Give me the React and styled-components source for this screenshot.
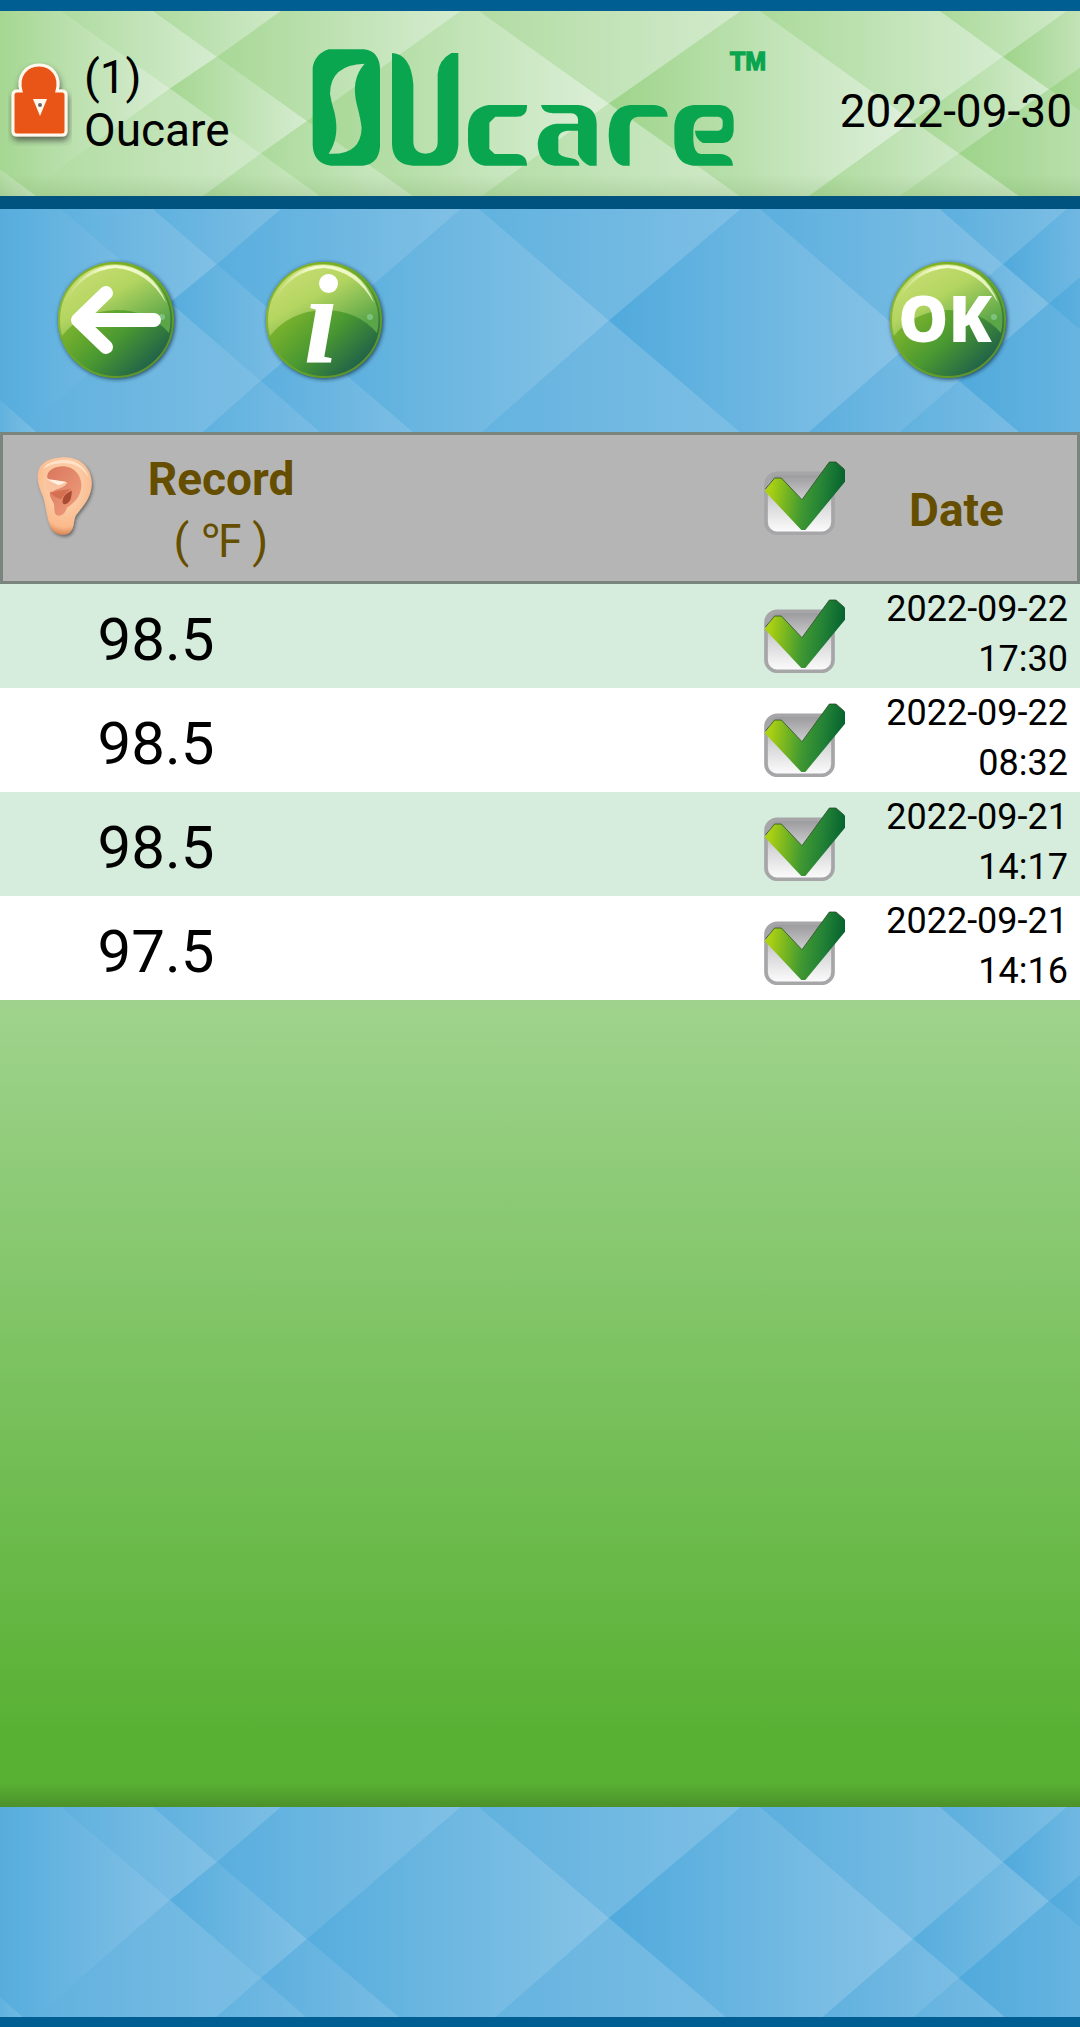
import React, { useId, useState } from "react";
import styled, { createGlobalStyle } from "styled-components";

const GlobalStyle = createGlobalStyle`
  *, *::before, *::after { box-sizing: border-box; }
  body {
    margin: 0;
    font-family: Roboto, "Noto Sans", sans-serif;
    color: #000;
  }
`;

/* ---------- faceted background ---------- */

const palettes = {
  green: { dark: [158, 212, 138], light: [223, 240, 220] },
  blue: { dark: [80, 170, 220], light: [138, 196, 231] },
};

const facets = [
  { points: "0,0 61,0 170,93 22,222 0,222", from: 0.1, to: 0.9 },
  { points: "0,222 22,222 170,93 261,171 203,222", from: 0.2, to: 0.75 },
  { points: "0,190 36,222 0,222", from: 0.3, to: 0.75 },
  { points: "61,0 153,0 217,55 170,93", from: 0.25, to: 0.85 },
  { points: "153,0 281,0 217,55", from: 0.25, to: 0.75 },
  { points: "170,93 217,55 307,132 261,171", from: 0.1, to: 0.85 },
  { points: "281,0 461,0 307,132 217,55", from: 0.15, to: 0.85 },
  { points: "203,222 261,171 320,222", from: 0.25, to: 0.7 },
  { points: "261,171 307,132 413,222 320,222", from: 0.2, to: 0.75 },
  { points: "461,0 479,0 609,111 482,222 413,222 307,132", from: 0.1, to: 0.95 },
  { points: "479,0 741,0 609,111", from: 0.3, to: 0.8 },
  { points: "482,222 609,111 740,222", from: 0.35, to: 0.75 },
  { points: "741,0 760,0 913,132 809,222 740,222 609,111", from: 0, to: 1 },
  { points: "760,0 940,0 1003,55 913,132", from: 0.2, to: 0.85 },
  { points: "940,0 1067,0 1003,55", from: 0.2, to: 0.75 },
  { points: "913,132 1003,55 1049,94 959,171", from: 0.1, to: 0.85 },
  { points: "1067,0 1080,0 1080,68 1049,94 1003,55", from: 0, to: 0.55 },
  { points: "1049,94 1080,68 1080,120", from: 0, to: 0.2 },
  { points: "809,222 913,132 959,171 900,222", from: 0.2, to: 0.75 },
  { points: "900,222 959,171 1019,222", from: 0.3, to: 0.7 },
  { points: "959,171 1049,94 1080,120 1080,222 1019,222", from: 0, to: 0.4 },
];

const mix = ({ dark, light }, t) =>
  `rgb(${dark.map((c, i) => Math.round(c + (light[i] - c) * t)).join(",")})`;

const FacetSvg = styled.svg`
  display: block;
  width: 100%;
  height: 100%;
  min-height: 0;
`;

function Facets({ tone, crop, shaded }) {
  const id = useId();
  const palette = palettes[tone];
  return (
    <FacetSvg
      viewBox="0 0 1080 222"
      preserveAspectRatio={crop ? "xMinYMin slice" : "none"}
      aria-hidden="true"
    >
      <defs>
        {facets.map((f, i) => (
          <linearGradient key={i} id={`${id}f${i}`}>
            <stop offset="0" stopColor={mix(palette, f.from)} />
            <stop offset="1" stopColor={mix(palette, f.to)} />
          </linearGradient>
        ))}
        <linearGradient id={`${id}s`} x2="0" y2="1">
          <stop offset="0" stopColor="#4b7a2c" stopOpacity="0" />
          <stop offset="1" stopColor="#4b7a2c" stopOpacity="0.14" />
        </linearGradient>
      </defs>
      <rect width="1080" height="222" fill={mix(palette, 0.4)} />
      {facets.map((f, i) => (
        <polygon key={i} points={f.points} fill={`url(#${id}f${i})`} />
      ))}
      {shaded && <rect y="196" width="1080" height="26" fill={`url(#${id}s)`} />}
    </FacetSvg>
  );
}

/* ---------- drawings ---------- */

const LockIcon = () => (
  <svg width="64" height="84" viewBox="-3 0 64 84" aria-hidden="true">
    <defs>
      <filter id="lockShadow" x="-20%" y="-20%" width="150%" height="150%">
        <feDropShadow dx="1" dy="4" stdDeviation="3" floodColor="#333" floodOpacity="0.7" />
      </filter>
    </defs>
    <path
      d="M10 29 C6 14 15 3 28 3 C41 3 50 14 46 29 H51 Q55 29 55 33 V69 Q55 73 51 73 H6 Q2 73 2 69 V33 Q2 29 6 29 Z"
      fill="#e85412"
      stroke="#fff8ee"
      strokeWidth="3"
      filter="url(#lockShadow)"
    />
    <path d="M22 37 H36 L29 54 Z" fill="#fff8ee" />
    <circle cx="29" cy="43" r="2" fill="#666" />
  </svg>
);

const Logo = styled.svg`
  display: block;
  width: 456px;
  height: 122px;
`;

const LogoBox = styled.div`
  padding-top: 3px;
`;

const Brand = () => (
  <LogoBox>
    <Logo viewBox="22 10 1368 366" role="img" aria-label="OUcare">
      <g fill="#0aa54f">
        <path
          fillRule="evenodd"
          d="M72 26H178Q226 32 226 88V318Q222 370 174 375H80Q27 370 24 314V82Q30 40 72 26ZM180 69Q76 72 76 160Q80 185 90 218Q106 290 72 339Q168 345 171 262Q168 235 156 190Q138 115 180 69Z"
        />
        <path d="M262 37Q318 40 326 130V305Q328 338 362 339Q398 338 399 305V100Q402 58 440 37H461V312Q458 370 405 375H325Q264 372 262 310Z" />
        <path d="M667 193V198Q667 228 635 228H572L554 246V325L570 340H635Q667 342 667 375H540Q490 366 490 300V265Q492 202 552 193Z" />
        <path d="M709 193H820Q874 197 876 248V375H855Q832 366 820 340V270H788Q764 272 761 290V335Q765 348 800 353Q826 358 824 375H750Q702 370 699 310Q702 256 755 249H820V235Q818 220 800 218H745Q712 216 709 193Z" />
        <path d="M1089 228H1000Q976 230 975 258V375H955Q915 365 912 285Q912 200 975 193H1045Q1088 195 1089 228Z" />
        <path d="M1167 193H1245Q1286 196 1287 240V270Q1284 304 1255 307H1195Q1172 295 1171 270H1240Q1253 268 1254 255V240Q1252 229 1240 228H1195Q1167 232 1166 270V300Q1168 338 1188 340H1245Q1283 342 1285 375H1165Q1112 370 1109 305V255Q1114 198 1167 193Z" />
        <text
          x="1384"
          y="89"
          textAnchor="end"
          fontFamily="'Liberation Sans', Arial, sans-serif"
          fontWeight="700"
          fontSize="75"
          stroke="#0aa54f"
          strokeWidth="4"
        >
          TM
        </text>
      </g>
    </Logo>
  </LogoBox>
);

function Disc() {
  const id = useId();
  return (
    <svg width="128" height="128" viewBox="-5 -5 128 128" aria-hidden="true">
      <defs>
        <linearGradient id={`${id}b`} x1="0.1" y1="0.3" x2="0.75" y2="1">
          <stop offset="0" stopColor="#93bf2c" />
          <stop offset="0.55" stopColor="#4b9a30" />
          <stop offset="1" stopColor="#1c5c4c" />
        </linearGradient>
        <linearGradient id={`${id}g`} x1="0.2" y1="0" x2="0.9" y2="0.8">
          <stop offset="0" stopColor="#c9df76" />
          <stop offset="0.45" stopColor="#b4d560" />
          <stop offset="1" stopColor="#5aa548" />
        </linearGradient>
        <linearGradient id={`${id}r`}>
          <stop offset="0" stopColor="#f4fbd0" stopOpacity="0" />
          <stop offset="0.4" stopColor="#f4fbd0" />
          <stop offset="1" stopColor="#f4fbd0" stopOpacity="0.8" />
        </linearGradient>
        <filter id={`${id}s`} x="-20%" y="-20%" width="140%" height="140%">
          <feDropShadow dx="1" dy="1" stdDeviation="2" floodColor="#123" floodOpacity="0.8" />
        </filter>
      </defs>
      <circle cx="59" cy="59" r="58" fill={`url(#${id}b)`} filter={`url(#${id}s)`} />
      <path d="M4 76A56 56 0 1 1 112 72Q92 49 59 49Q24 50 4 76Z" fill={`url(#${id}g)`} />
      <path d="M8 42Q24 5 59 4Q96 6 109 42Q91 10 59 7Q26 9 8 42Z" fill={`url(#${id}r)`} />
      <circle cx="59" cy="59" r="57" fill="none" stroke="#76aa22" strokeWidth="2" strokeOpacity="0.7" />
      <circle cx="105" cy="56" r="3" fill="#8fd3a0" fillOpacity="0.6" />
    </svg>
  );
}

const BackArrow = () => (
  <svg width="92" height="68" viewBox="0 0 92 68" aria-hidden="true">
    <path
      d="M36 7L8 34L36 61M10 34H84"
      fill="none"
      stroke="#fff"
      strokeWidth="14"
      strokeLinecap="round"
      strokeLinejoin="round"
    />
  </svg>
);

const EarIcon = () => (
  <svg width="60" height="84" viewBox="0 0 180 252" aria-hidden="true">
    <defs>
      <radialGradient id="earSkin" cx="0.5" cy="0.35" r="0.65">
        <stop offset="0.5" stopColor="#fbc9a2" />
        <stop offset="0.85" stopColor="#fbb98a" />
        <stop offset="1" stopColor="#d98758" />
      </radialGradient>
      <linearGradient id="earInner" x1="0" y1="0" x2="1" y2="1">
        <stop offset="0" stopColor="#d9765c" />
        <stop offset="1" stopColor="#f0a07e" />
      </linearGradient>
      <filter id="earShadow" x="-20%" y="-20%" width="150%" height="150%">
        <feDropShadow dx="4" dy="6" stdDeviation="5" floodColor="#333" floodOpacity="0.55" />
      </filter>
    </defs>
    <path
      d="M80 4C132 0 170 38 167 88C163 130 142 148 120 178C111 194 117 216 101 230C84 242 54 236 44 214C32 184 30 150 22 124C8 92 0 66 8 42C18 16 46 6 80 4Z"
      fill="url(#earSkin)"
      filter="url(#earShadow)"
    />
    <path d="M20 40C34 18 58 12 90 12C122 14 150 34 158 66C140 34 116 22 84 22C56 22 38 28 20 40Z" fill="#ffe3c9" />
    <path
      d="M34 66C30 44 58 30 84 31C120 33 139 66 136 94C132 124 114 142 94 154C88 168 82 180 67 179C50 176 58 156 53 142C46 128 36 116 44 104L70 84C60 74 44 78 34 66Z"
      fill="url(#earInner)"
    />
    <path d="M32 70C52 80 74 72 94 80C88 92 72 96 58 102C44 112 34 108 30 94Z" fill="#f9c3a1" />
    <path d="M32 69Q60 72 92 78Q82 82 68 88Q50 80 32 69Z" fill="#fff1e4" />
    <path d="M108 104C90 110 78 122 80 142C90 150 104 138 106 120Z" fill="#a94a33" />
    <path d="M44 110Q66 104 106 98Q82 116 76 130Q54 124 44 110Z" fill="#d47051" />
  </svg>
);

/* ---------- checkbox ---------- */

const TickLabel = styled.label`
  display: inline-grid;
  vertical-align: middle;
  cursor: pointer;
  & > * {
    grid-area: 1 / 1;
  }
`;

const TickInput = styled.input`
  appearance: none;
  width: 100%;
  height: 100%;
  margin: 0;
`;

const TickSvg = styled.svg`
  display: block;
  width: 81px;
  height: 74px;
  pointer-events: none;
`;

function Tick({ label, checked, onChange }) {
  const id = useId();
  return (
    <TickLabel>
      <TickInput type="checkbox" aria-label={label} checked={checked} onChange={onChange} />
      <TickSvg viewBox="0 0 243 222" aria-hidden="true">
        <defs>
          <linearGradient id={`${id}b`} x2="0" y2="1">
            <stop offset="0" stopColor="#98989b" />
            <stop offset="0.5" stopColor="#d6d6d8" />
            <stop offset="1" stopColor="#fdfdfd" />
          </linearGradient>
          <linearGradient id={`${id}c`} y1="0.3" y2="0.4">
            <stop offset="0.08" stopColor="#aad012" />
            <stop offset="0.5" stopColor="#3f9832" />
            <stop offset="0.75" stopColor="#218036" />
            <stop offset="1" stopColor="#04602f" />
          </linearGradient>
        </defs>
        <rect x="6" y="37" width="201" height="180" rx="34" fill={`url(#${id}b)`} stroke="#a6a6a9" strokeWidth="11" />
        {checked && (
          <>
            <path d="M2 90L32 51H52L114 116L196 3H216L243 26V62L124 207H112Z" fill={`url(#${id}c)`} />
            <path d="M4 84L32 51H52L114 116L196 3H216L240 24" fill="none" stroke="#23481c" strokeWidth="3" strokeOpacity="0.75" />
          </>
        )}
      </TickSvg>
    </TickLabel>
  );
}

/* ---------- page ---------- */

const Page = styled.div`
  display: flex;
  flex-direction: column;
  min-height: 100vh;
`;

const Rule = styled.div`
  height: ${(p) => p.$size}px;
  background: ${(p) => (p.$deep ? "#00527f" : "#005e93")};
`;

const Band = styled.div`
  display: grid;
  grid-template-columns: minmax(0, 1fr);
  grid-template-rows: ${(p) => p.$height}px;
  & > * {
    grid-area: 1 / 1;
  }
`;

const HeaderContent = styled.header`
  display: grid;
  grid-template-columns: 1fr auto 1fr;
  align-items: center;
  padding: 0 8px;
`;

const User = styled.div`
  display: flex;
  align-items: center;
  gap: 12px;
  font-size: 46px;
  line-height: 53px;
`;

const Today = styled.time`
  justify-self: end;
  padding-top: 16px;
  font-size: 46px;
  line-height: 53px;
`;

const Toolbar = styled.nav`
  display: grid;
  grid-template-columns: repeat(5, 1fr);
  align-items: center;
  justify-items: center;
  padding: 0 28px 2px 12px;
`;

const RoundButton = styled.button`
  display: grid;
  place-items: center;
  grid-column: ${(p) => p.$column};
  width: 128px;
  height: 128px;
  padding: 0;
  border: 0;
  border-radius: 50%;
  background: none;
  color: #fff;
  cursor: pointer;
  & > * {
    grid-area: 1 / 1;
  }
`;

const OkText = styled.span`
  padding: 0 6px 4px 0;
  font: 800 63px/60px "Open Sans", "Noto Sans", sans-serif;
`;

const InfoText = styled.span`
  padding-right: 6px;
  font: italic 700 126px/118px "Liberation Serif", serif;
`;

const Main = styled.main`
  flex: 1;
  background:
    linear-gradient(to top, rgba(72, 134, 40, 0.75), rgba(72, 134, 40, 0) 24px),
    linear-gradient(to bottom, #9fd38d 568px, #58b133 95%);
`;

const Records = styled.table`
  width: 100%;
  table-layout: fixed;
  border-collapse: separate;
  border-spacing: 0;
`;

const Column = styled.col`
  width: ${(p) => p.$width};
`;

const Head = styled.th`
  height: 152px;
  padding: ${(p) => p.$pad || "0"};
  border: solid #7a857d;
  border-width: 3px 0;
  background: #b5b5b5;
  color: #664e00;
  font-size: 46px;
  font-weight: 700;
  line-height: 62px;
  text-align: ${(p) => p.$align || "center"};
  &:first-child {
    border-left-width: 3px;
  }
  &:last-child {
    border-right-width: 3px;
  }
  svg {
    display: block;
  }
`;

const Unit = styled.div`
  font-weight: 400;
`;

const Row = styled.tr`
  background: #fff;
  &:nth-child(odd) {
    background: #d6ecdc;
  }
`;

const Cell = styled.td`
  height: 104px;
  padding: 0;
  text-align: right;
`;

const Value = styled(Cell)`
  padding-top: 8px;
  font-size: 60px;
  line-height: 70px;
  text-align: center;
`;

const When = styled(Cell)`
  padding: 0 12px 4px 0;
  font-size: 36px;
  line-height: 50px;
`;

const initial = [
  { value: "98.5", date: "2022-09-22", time: "17:30", checked: true },
  { value: "98.5", date: "2022-09-22", time: "08:32", checked: true },
  { value: "98.5", date: "2022-09-21", time: "14:17", checked: true },
  { value: "97.5", date: "2022-09-21", time: "14:16", checked: true },
];

export default function App() {
  const [records, setRecords] = useState(initial);
  const all = records.every((r) => r.checked);
  const toggleAll = () => setRecords(records.map((r) => ({ ...r, checked: !all })));
  const toggle = (index) =>
    setRecords(records.map((r, i) => (i === index ? { ...r, checked: !r.checked } : r)));

  return (
    <Page>
      <GlobalStyle />
      <Rule $size={11} />
      <Band $height={185}>
        <Facets tone="green" shaded />
        <HeaderContent>
          <User>
            <LockIcon />
            <div>
              (1)
              <br />
              Oucare
            </div>
          </User>
          <Brand />
          <Today dateTime="2022-09-30">2022-09-30</Today>
        </HeaderContent>
      </Band>
      <Rule $size={13} $deep />
      <Band $height={223}>
        <Facets tone="blue" />
        <Toolbar>
          <RoundButton $column={1} aria-label="Back">
            <Disc />
            <BackArrow />
          </RoundButton>
          <RoundButton $column={2} aria-label="Information">
            <Disc />
            <InfoText>i</InfoText>
          </RoundButton>
          <RoundButton $column={5}>
            <Disc />
            <OkText>OK</OkText>
          </RoundButton>
        </Toolbar>
      </Band>
      <Main>
        <Records>
          <colgroup>
            <Column $width="130px" />
            <Column $width="182px" />
            <Column $width="auto" />
            <Column $width="235px" />
          </colgroup>
          <thead>
            <tr>
              <Head $pad="0 0 20px 33px">
                <EarIcon />
              </Head>
              <Head $pad="4px 0 0">
                Record
                <Unit>( ℉ )</Unit>
              </Head>
              <Head $pad="0 0 20px" $align="right">
                <Tick label="Select all" checked={all} onChange={toggleAll} />
              </Head>
              <Head $pad="4px 9px 0 0">Date</Head>
            </tr>
          </thead>
          <tbody>
            {records.map((r, i) => (
              <Row key={r.date + r.time}>
                <Value colSpan={2}>{r.value}</Value>
                <Cell>
                  <Tick
                    label={`Select ${r.date} ${r.time}`}
                    checked={r.checked}
                    onChange={() => toggle(i)}
                  />
                </Cell>
                <When>
                  {r.date}
                  <br />
                  {r.time}
                </When>
              </Row>
            ))}
          </tbody>
        </Records>
      </Main>
      <Band $height={210}>
        <Facets tone="blue" crop />
      </Band>
      <Rule $size={10} />
    </Page>
  );
}
